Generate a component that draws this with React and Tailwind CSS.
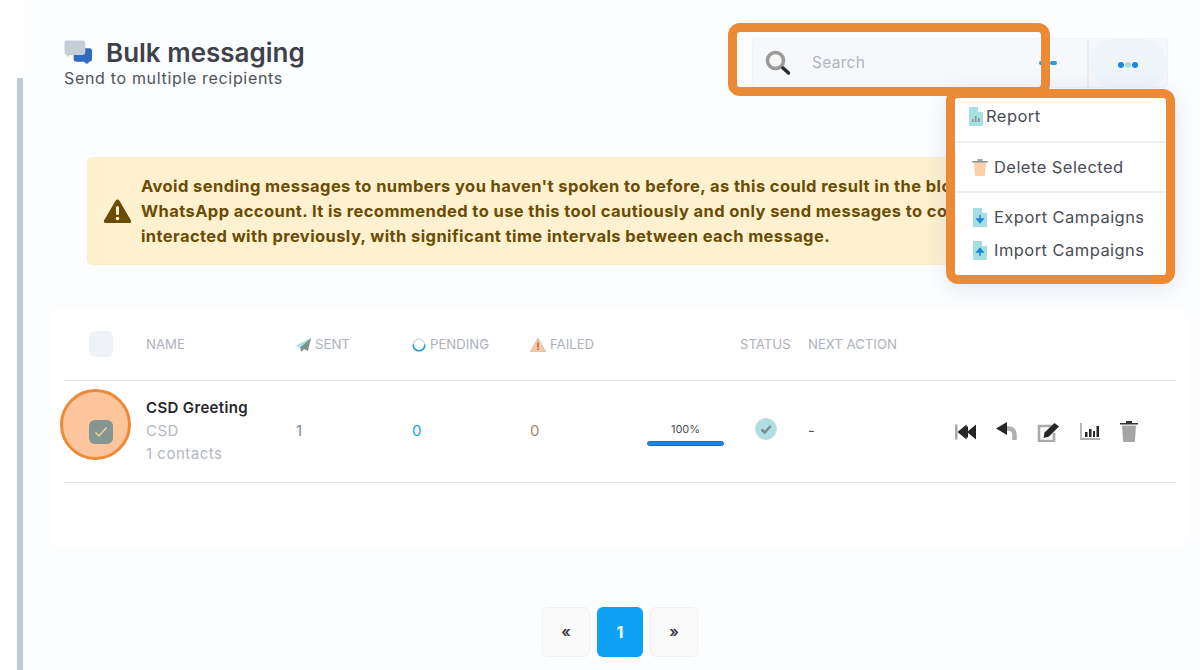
const font = { fontFamily: '"Inter", "Noto Sans", sans-serif' };

function ChatIcon() {
  return (
    <svg width="29" height="26" viewBox="0 0 30 26" className="shrink-0">
      <path d="M12 9h14a2.500 2.500 0 0 1 2.500 2.500v9a2.500 2.500 0 0 1-2.500 2.500h-1v1.500L22.500 25l-2-2H12a2.500 2.500 0 0 1-2.500-2.500v-9A2.500 2.500 0 0 1 12 9z" transform="translate(0.500 -1)" fill="#2f6bc0" />
      <path d="M3 0h16.500A2.500 2.500 0 0 1 22 2.500v10a2.500 2.500 0 0 1-2.500 2.500H6l-2.500 2.500L3 15a2.500 2.500 0 0 1-2.500-2.500v-10A2.500 2.500 0 0 1 3 0z" fill="#c5ced8" />
    </svg>
  );
}

function SearchIcon() {
  return (
    <svg width="26" height="26" viewBox="0 0 26 26">
      <circle cx="10.500" cy="10.500" r="8" fill="#f4f6f8" stroke="#9a9a96" strokeWidth="3.500" />
      <path d="M16.500 16.500l2 2" stroke="#8a8a86" strokeWidth="3" />
      <path d="M18 18l5.500 5" stroke="#2c2c2c" strokeWidth="3.500" strokeLinecap="round" />
    </svg>
  );
}

function WarningIcon() {
  return (
    <svg width="29" height="26" viewBox="0 0 29 26" className="shrink-0">
      <path d="M14.500 1.500c.8 0 1.400.4 1.800 1.100l11.700 20c.6 1.100-.1 2.400-1.400 2.400H2.400c-1.300 0-2-1.300-1.400-2.400l11.700-20c.4-.7 1-1.100 1.800-1.100z" fill="#6b4c05" />
      <rect x="13" y="8" width="3" height="9" rx="1.500" fill="#fdf1cf" />
      <circle cx="14.500" cy="20.500" r="1.800" fill="#fdf1cf" />
    </svg>
  );
}

function FileIcon({ children }) {
  return (
    <svg width="14" height="19" viewBox="0 0 14 19" className="shrink-0">
      <path d="M1 0h8l5 5v13a1 1 0 0 1-1 1H1a1 1 0 0 1-1-1V1a1 1 0 0 1 1-1z" fill="#a5dfe2" />
      <path d="M9 0l5 5H9z" fill="#ffffff" />
      {children}
    </svg>
  );
}

function TrashMenuIcon() {
  return (
    <svg width="16" height="18" viewBox="0 0 16 18" className="shrink-0">
      <path d="M2 4h12l-1 13a1 1 0 0 1-1 1H4a1 1 0 0 1-1-1z" fill="#fdcfa8" />
      <path d="M0 3h16v1.500H0z" fill="#8d9a94" />
      <path d="M5.500 1h5v2h-5z" fill="#9aa59f" />
    </svg>
  );
}

function PlaneIcon() {
  return (
    <svg width="15" height="14" viewBox="0 0 15 14" className="shrink-0">
      <path d="M15 0L0 7.500l4 2z" fill="#a5dfe2" />
      <path d="M15 0L4 9.500 5.500 14l2.500-3 4 2z" fill="#7e918f" />
    </svg>
  );
}

function SpinnerIcon() {
  return (
    <svg width="14" height="14" viewBox="0 0 14 14" className="shrink-0" fill="none">
      <circle cx="7" cy="7" r="5.800" stroke="#c9dbe6" strokeWidth="1.200" />
      <path d="M1.200 7a5.800 5.800 0 0 0 11.600 0" stroke="#1f9ee0" strokeWidth="1.600" strokeLinecap="round" />
    </svg>
  );
}

function FailedIcon() {
  return (
    <svg width="16" height="14" viewBox="0 0 16 14" className="shrink-0">
      <path d="M8 0l8 14H0z" fill="#f8c6a2" stroke="#b9bec4" strokeWidth=".6" />
      <rect x="7.300" y="4.500" width="1.400" height="5" fill="#b4552a" />
      <rect x="7.300" y="10.500" width="1.400" height="1.500" fill="#b4552a" />
    </svg>
  );
}

function StatusIcon() {
  return (
    <svg width="22" height="22" viewBox="0 0 22 22">
      <circle cx="11" cy="11" r="10.500" fill="#aedfe3" stroke="#cfd6da" />
      <path d="M6.500 11.500l3.200 3 6-6.500" fill="none" stroke="#7d8a8c" strokeWidth="2.400" />
    </svg>
  );
}

function RewindIcon() {
  return (
    <svg width="21" height="16" viewBox="0 0 21 16">
      <rect x="0" y="0.500" width="2.500" height="15" fill="#a9a9a9" />
      <path d="M11.500 0.500v15L2.500 8z" fill="#262626" />
      <path d="M21 0.500v15L12 8z" fill="#262626" />
      <path d="M11 2.500h2V13.500h-2z" fill="#262626" />
    </svg>
  );
}

function ReplyIcon() {
  return (
    <svg width="21" height="19" viewBox="0 0 21 19">
      <path d="M9 6.500h3c4.500 0 6.500 2.500 6.500 6.500v5" fill="none" stroke="#b0b0b0" strokeWidth="4.500" />
      <path d="M11 0v13L0 6.500z" fill="#262626" />
    </svg>
  );
}

function EditIcon() {
  return (
    <svg width="23" height="20" viewBox="0 0 23 20">
      <path d="M15 4H2v15h15v-8" fill="none" stroke="#a9a9a9" strokeWidth="2.600" />
      <path d="M7.500 10.500L17.500 1 22 4.500l-10 10-5.500 1.500z" fill="#262626" />
    </svg>
  );
}

function ChartIcon() {
  return (
    <svg width="20" height="18" viewBox="0 0 20 18">
      <path d="M1 0v16h19" fill="none" stroke="#b0b0b0" strokeWidth="1.800" />
      <path d="M5 9h2.500v5H5zM9 6h2.500v8H9zM13 8h2v6h-2zM16.500 3H19v11h-2.500z" fill="#262626" />
    </svg>
  );
}

function TrashIcon() {
  return (
    <svg width="18" height="21" viewBox="0 0 18 21">
      <path d="M2 4.500h14l-1 15a1.500 1.500 0 0 1-1.500 1.500h-9A1.500 1.500 0 0 1 3 19.500z" fill="#a5a5a5" />
      <path d="M0 2h18v1.500H0z" fill="#333333" />
      <path d="M6 0h6v2H6z" fill="#333333" />
    </svg>
  );
}

function Highlight({ className }) {
  return <div className={`absolute rounded-[12px] border-[9px] border-[#ec8a35] ${className}`} />;
}

function MenuRow({ icon, label, className }) {
  return (
    <div className={`flex items-center ${className}`}>
      {icon}
      <span className="text-[16.500px] leading-none tracking-[0.45px] text-[#4a4d55] whitespace-nowrap">{label}</span>
    </div>
  );
}

function HeaderCell({ icon, label, className }) {
  return (
    <div className={`flex items-center gap-[4px] text-[13.200px] pt-[2px] text-[#adb1bb] whitespace-nowrap ${className}`}>
      {icon}
      {label}
    </div>
  );
}

export default function App() {
  return (
    <div className="relative flex w-[1200px] h-[670px] overflow-hidden bg-white" style={font}>
      <div className="w-[23px] shrink-0 pl-[17px] pt-[78px]">
        <div className="h-full w-[6px] bg-[#c2cbd4]" />
      </div>

      <main className="flex-1 bg-[#fcfdff] pl-[27px] pr-[12px]">
        <header className="flex justify-between pt-[38px] pr-[20px]">
          <div className="pl-[14px] pt-[1px]">
            <div className="flex items-center gap-[13px]">
              <ChatIcon />
              <h1 className="text-[26px] leading-[28px] font-semibold text-[#3f4149]">Bulk messaging</h1>
            </div>
            <p className="text-[16px] leading-[22px] tracking-[0.67px] text-[#50535a]">Send to multiple recipients</p>
          </div>

          <div className="flex h-[50px] w-[416px] rounded-[4px] border border-[#f0f2f6] bg-[#f7f8fb]">
            <div className="flex flex-1 items-center border-r-2 border-[#e9ebee] pl-[12px] pr-[30px]">
              <SearchIcon />
              <span className="ml-[21px] text-[15.500px] tracking-[0.3px] text-[#b2b5ba]">Search</span>
              <div className="ml-auto flex items-center gap-[1px]">
                <span className="h-[4px] w-[4px] rounded-full bg-[#1f9ee0]" />
                <span className="h-[3px] w-[5px] bg-[#a5dfe2]" />
                <span className="h-[4px] w-[7px] rounded-full bg-[#1f9ee0]" />
              </div>
            </div>
            <div className="flex w-[78px] items-center justify-center rounded-[24px] bg-[#eff5fb] pt-[4px]">
              <div className="flex items-center gap-[1px]">
                <span className="h-[6px] w-[6px] rounded-full bg-[#1f86e0]" />
                <span className="h-[6px] w-[6px] rounded-full bg-[#a5dfe2]" />
                <span className="h-[6px] w-[6px] rounded-full bg-[#1f86e0]" />
              </div>
            </div>
          </div>
        </header>

        <div className="ml-[37px] mt-[68px] flex h-[108px] w-[868px] items-center gap-[9px] overflow-hidden rounded-[5px] border border-[#f8efd0] bg-[#fdf1cf] pl-[15px]">
          <WarningIcon />
          <p className="text-[16.500px] leading-[25px] font-bold tracking-[0.4px] text-[#6b4c05] whitespace-nowrap">
            Avoid sending messages to numbers you haven't spoken to before, as this could result in the blocking of your
            <br />
            WhatsApp account. It is recommended to use this tool cautiously and only send messages to contacts you have
            <br />
            interacted with previously, with significant time intervals between each message.
          </p>
        </div>

        <section className="mt-[42px] h-[242px] rounded-[12px] bg-white pl-[14px] pr-[12px] pt-[24px]">
          <div className="flex h-[50px] items-start border-b border-[#e4e6e9]">
            <div className="w-[82px] pl-[25px]">
              <div className="h-[26px] w-[24px] rounded-[6px] bg-[#eef1f5]" />
            </div>
            <HeaderCell label="NAME" className="h-[26px] w-[150px]" />
            <HeaderCell icon={<PlaneIcon />} label="SENT" className="h-[26px] w-[116px]" />
            <HeaderCell icon={<SpinnerIcon />} label="PENDING" className="h-[26px] w-[118px]" />
            <HeaderCell icon={<FailedIcon />} label="FAILED" className="h-[26px] w-[210px]" />
            <HeaderCell label="STATUS" className="h-[26px] w-[68px]" />
            <HeaderCell label="NEXT ACTION" className="h-[26px]" />
          </div>

          <div className="flex h-[102px] items-center border-b border-[#e4e6e9]">
            <div className="relative w-[82px] pl-[25px]">
              <div className="absolute -top-[31px] -left-[4px] h-[71px] w-[71px] rounded-full border-[3px] border-[#ee8a35] bg-[#fdc59b]" />
              <div className="relative flex h-[24px] w-[24px] items-center justify-center rounded-[6px] bg-[#849592]">
                <svg width="14" height="12" viewBox="0 0 14 12">
                  <path d="M1.500 6.500l3.500 3.500 7.500-8.500" fill="none" stroke="#f5cf8e" strokeWidth="1.500" />
                </svg>
              </div>
            </div>
            <div className="w-[150px] -mt-[2px]">
              <div className="text-[15px] leading-[23px] font-semibold tracking-[0.35px] text-[#26272b]">CSD Greeting</div>
              <div className="text-[15px] leading-[23px] tracking-[0.5px] text-[#b4b8c0]">CSD</div>
              <div className="text-[15px] leading-[23px] tracking-[0.5px] text-[#b4b8c0]">1 contacts</div>
            </div>
            <div className="w-[116px] text-[15px] text-[#7e8a8c]">1</div>
            <div className="w-[118px] text-[15px] text-[#1f9ee0]">0</div>
            <div className="w-[117px] text-[15px] text-[#a08768]">0</div>
            <div className="w-[93px] -mb-[4px]">
              <div className="w-[77px] text-center text-[11px] leading-[14px] text-[#4a4d55]">100%</div>
              <div className="mt-[5px] h-[5px] w-[77px] rounded-full border border-[#1a6fc0] bg-[#1f86e0]" />
            </div>
            <div className="w-[68px] -mt-[6px] pl-[15px]">
              <StatusIcon />
            </div>
            <div className="w-[147px] text-[15px] text-[#55585f]">-</div>
            <div className="flex w-[190px] items-center">
              <div className="w-[41px]"><RewindIcon /></div>
              <div className="w-[41px]"><ReplyIcon /></div>
              <div className="w-[43px]"><EditIcon /></div>
              <div className="w-[40px]"><ChartIcon /></div>
              <TrashIcon />
            </div>
          </div>
        </section>

        <nav className="mt-[58px] flex items-center justify-center gap-[7px] pl-[2px]">
          <div className="flex h-[50px] w-[48px] items-center justify-center rounded-[6px] border border-[#f1f1f1] bg-[#fafafa] text-[15px] font-semibold text-[#33353a]">«</div>
          <div className="flex h-[50px] w-[46px] items-center justify-center rounded-[6px] bg-[#0ea2f5] text-[16px] font-bold text-white">1</div>
          <div className="flex h-[50px] w-[48px] items-center justify-center rounded-[6px] border border-[#f1f1f1] bg-[#fafafa] text-[15px] font-semibold text-[#33353a]">»</div>
        </nav>
      </main>

      <Highlight className="left-[728px] top-[23px] h-[73px] w-[322px]" />

      <div className="absolute left-[946px] top-[89px] h-[195px] w-[229px] overflow-hidden rounded-[12px] border-[9px] border-[#ec8a35] bg-white shadow-[0_4px_24px_rgba(120,130,160,0.18)]">
        <MenuRow icon={<FileIcon><path d="M3 15h1.500v-3H3zM6 15h1.500V9H6zM9 15h1.500v-4H9z" fill="#7e918f" /></FileIcon>} label="Report" className="h-[43px] gap-[3px] pl-[14px] pb-[6px]" />
        <div className="h-[2px] bg-[#eeeff1]" />
        <MenuRow icon={<TrashMenuIcon />} label="Delete Selected" className="h-[48px] gap-[6px] pl-[17px]" />
        <div className="h-[2px] bg-[#eeeff1]" />
        <MenuRow icon={<FileIcon><path d="M7 7v6M4 11l3 3.500 3-3.500z" stroke="#1f86e0" strokeWidth="1.500" fill="#1f86e0" /></FileIcon>} label="Export Campaigns" className="h-[48px] gap-[7px] pl-[18px]" />
        <MenuRow icon={<FileIcon><path d="M7 15V9M4 11l3-3.500 3 3.500z" stroke="#1f86e0" strokeWidth="1.500" fill="#1f86e0" /></FileIcon>} label="Import Campaigns" className="h-[18px] gap-[7px] pl-[18px]" />
      </div>
    </div>
  );
}
